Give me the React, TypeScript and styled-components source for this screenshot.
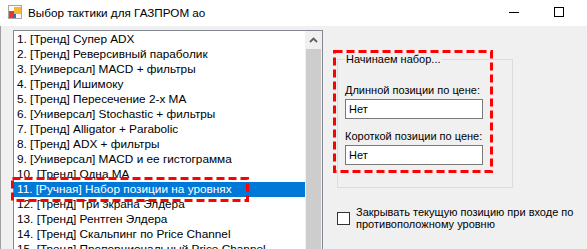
import React from "react";
import styled, { createGlobalStyle } from "styled-components";

const items = [
  "1. [Тренд] Супер ADX",
  "2. [Тренд] Реверсивный параболик",
  "3. [Универсал] MACD + фильтры",
  "4. [Тренд] Ишимоку",
  "5. [Тренд] Пересечение 2-х MA",
  "6. [Универсал] Stochastic + фильтры",
  "7. [Тренд] Alligator + Parabolic",
  "8. [Тренд] ADX + фильтры",
  "9. [Универсал] MACD и ее гистограмма",
  "10. [Тренд] Одна MA",
  "11. [Ручная] Набор позиции на уровнях",
  "12. [Тренд] Три экрана Элдера",
  "13. [Тренд] Рентген Элдера",
  "14. [Тренд] Скальпинг по Price Channel",
  "15. [Тренд] Пропорциональный Price Channel",
];

const SELECTED = 10;

const GlobalStyle = createGlobalStyle`
  html, body {
    margin: 0;
    padding: 0;
  }
  body {
    background: #f0f0f0;
    font-family: "Liberation Sans", Arial, sans-serif;
    overflow: hidden;
  }
`;

const AppIcon = () => (
  <svg width="16" height="16" viewBox="0 0 16 16">
    <rect x="1.5" y="1.5" width="13" height="13" fill="#fafafa" stroke="#a6a6a6" />
    <rect x="7" y="3" width="7" height="7" fill="#f5b82e" />
    <rect x="2" y="7" width="5" height="7" fill="#e03a2f" />
    <rect x="6" y="10" width="3" height="4" fill="#2f6fd6" />
  </svg>
);

const ScrollUpIcon = () => (
  <svg width="9" height="6" viewBox="0 0 9 6">
    <polyline points="1,5 4.5,1.5 8,5" fill="none" stroke="#606060" strokeWidth="1.8" />
  </svg>
);

const DashedFrame = ({ w, h }: { w: number; h: number }) => (
  <svg width={w} height={h}>
    <rect
      x="1.5"
      y="1.5"
      width={w - 3}
      height={h - 3}
      fill="none"
      stroke="#ff0000"
      strokeWidth="3"
      strokeDasharray="8 4"
    />
  </svg>
);

export default function App() {
  return (
    <>
      <GlobalStyle />
      <Window>
        <TitleBar>
          <AppIcon />
          <Caption>Выбор тактики для ГАЗПРОМ ао</Caption>
          <CaptionButtons>
            <CaptionButton>
              <MinimizeGlyph />
            </CaptionButton>
            <CaptionButton>
              <MaximizeGlyph />
            </CaptionButton>
          </CaptionButtons>
        </TitleBar>
        <Body>
          <ListBox>
            <ItemList>
              {items.map((text, i) => (
                <Item key={text} $selected={i === SELECTED}>
                  {text}
                  {i === SELECTED && (
                    <Mark $left={-3} $top={-5}>
                      <DashedFrame w={238} h={25} />
                    </Mark>
                  )}
                </Item>
              ))}
            </ItemList>
            <ScrollBar>
              <ScrollArrow>
                <ScrollUpIcon />
              </ScrollArrow>
              <ScrollThumb />
            </ScrollBar>
          </ListBox>
          <RightPanel>
            <GroupWrap>
              <GroupBox>
                <Legend>Начинаем набор...</Legend>
                <FieldLabel $first>Длинной позиции по цене:</FieldLabel>
                <TextBox readOnly value="Нет" />
                <FieldLabel>Короткой позиции по цене:</FieldLabel>
                <TextBox readOnly value="Нет" />
              </GroupBox>
              <Mark $left={-4} $top={-3}>
                <DashedFrame w={160} h={123} />
              </Mark>
            </GroupWrap>
            <CheckRow>
              <CheckBox />
              <CheckLabel>
                Закрывать текущую позицию при входе по
                <br />
                противоположному уровню
              </CheckLabel>
            </CheckRow>
          </RightPanel>
        </Body>
      </Window>
    </>
  );
}

const Window = styled.div`
  width: 587px;
  height: 249px;
  overflow: hidden;
  display: flex;
  flex-direction: column;
  background: #f0f0f0;
`;

const TitleBar = styled.div`
  height: 26px;
  flex-shrink: 0;
  box-sizing: border-box;
  background: #ffffff;
  display: flex;
  align-items: center;
  padding: 0 6px 2px 7px;
`;

const Caption = styled.span`
  margin-left: 5px;
  font-size: 11.7px;
  color: #000000;
  white-space: nowrap;
`;

const CaptionButtons = styled.div`
  margin-left: auto;
  display: flex;
`;

const CaptionButton = styled.div`
  width: 45px;
  height: 22px;
  display: flex;
  align-items: center;
  justify-content: center;
`;

const MinimizeGlyph = styled.div`
  width: 10px;
  height: 1px;
  background: #000000;
`;

const MaximizeGlyph = styled.div`
  width: 10px;
  height: 10px;
  box-sizing: border-box;
  border: 1px solid #000000;
`;

const Body = styled.div`
  flex: 1;
  display: flex;
  align-items: flex-start;
  border-left: 1px solid #a0a0a0;
  padding: 4px 0 0 12px;
  min-height: 0;
`;

const ListBox = styled.div`
  width: 310px;
  height: 240px;
  flex-shrink: 0;
  box-sizing: border-box;
  border: 1px solid #828790;
  border-bottom: none;
  background: #ffffff;
  display: flex;
`;

const ItemList = styled.ul`
  flex: 1;
  margin: 0;
  padding: 1px 0 0;
  list-style: none;
`;

const Item = styled.li<{ $selected?: boolean }>`
  position: relative;
  height: 15px;
  line-height: 15px;
  padding-left: 3px;
  font-size: 11.8px;
  white-space: nowrap;
  color: ${(p) => (p.$selected ? "#ffffff" : "#000000")};
  background: ${(p) => (p.$selected ? "#0078d7" : "transparent")};
`;

const Mark = styled.div<{ $left: number; $top: number }>`
  position: absolute;
  left: ${(p) => p.$left}px;
  top: ${(p) => p.$top}px;
  line-height: 0;
  z-index: 2;
  pointer-events: none;
`;

const ScrollBar = styled.div`
  width: 17px;
  background: #f0f0f0;
  display: flex;
  flex-direction: column;
`;

const ScrollArrow = styled.div`
  height: 17px;
  display: flex;
  align-items: center;
  justify-content: center;
`;

const ScrollThumb = styled.div`
  flex: 1;
  margin: 1px 1px 0;
  background: #cdcdcd;
`;

const RightPanel = styled.div`
  margin-left: 14px;
  display: flex;
  flex-direction: column;
`;

const GroupWrap = styled.div`
  position: relative;
  margin-top: 23px;
`;

const GroupBox = styled.fieldset`
  width: 176px;
  box-sizing: border-box;
  margin: 0;
  padding: 0 0 22px 7px;
  border: 1px solid #dcdcdc;
  display: flex;
  flex-direction: column;
  align-items: flex-start;
`;

const Legend = styled.legend`
  padding: 0 1px;
  margin-left: 0;
  font-size: 11px;
  line-height: 13px;
  color: #000000;
`;

const FieldLabel = styled.div<{ $first?: boolean }>`
  margin-top: ${(p) => (p.$first ? 18 : 11)}px;
  font-size: 11px;
  line-height: 13px;
  color: #000000;
  white-space: nowrap;
`;

const TextBox = styled.input`
  margin-top: 2px;
  width: 138px;
  height: 20px;
  box-sizing: border-box;
  border: 1px solid #7a7a7a;
  background: #ffffff;
  padding: 0 0 0 3px;
  font-family: "Liberation Sans", Arial, sans-serif;
  font-size: 11px;
  color: #000000;
  outline: none;
`;

const CheckRow = styled.div`
  margin-top: 18px;
  display: flex;
  align-items: center;
  gap: 6px;
`;

const CheckBox = styled.div`
  width: 13px;
  height: 13px;
  box-sizing: border-box;
  border: 1px solid #333333;
  background: #ffffff;
  flex-shrink: 0;
`;

const CheckLabel = styled.div`
  font-size: 11px;
  line-height: 12px;
  color: #000000;
  white-space: nowrap;
`;
